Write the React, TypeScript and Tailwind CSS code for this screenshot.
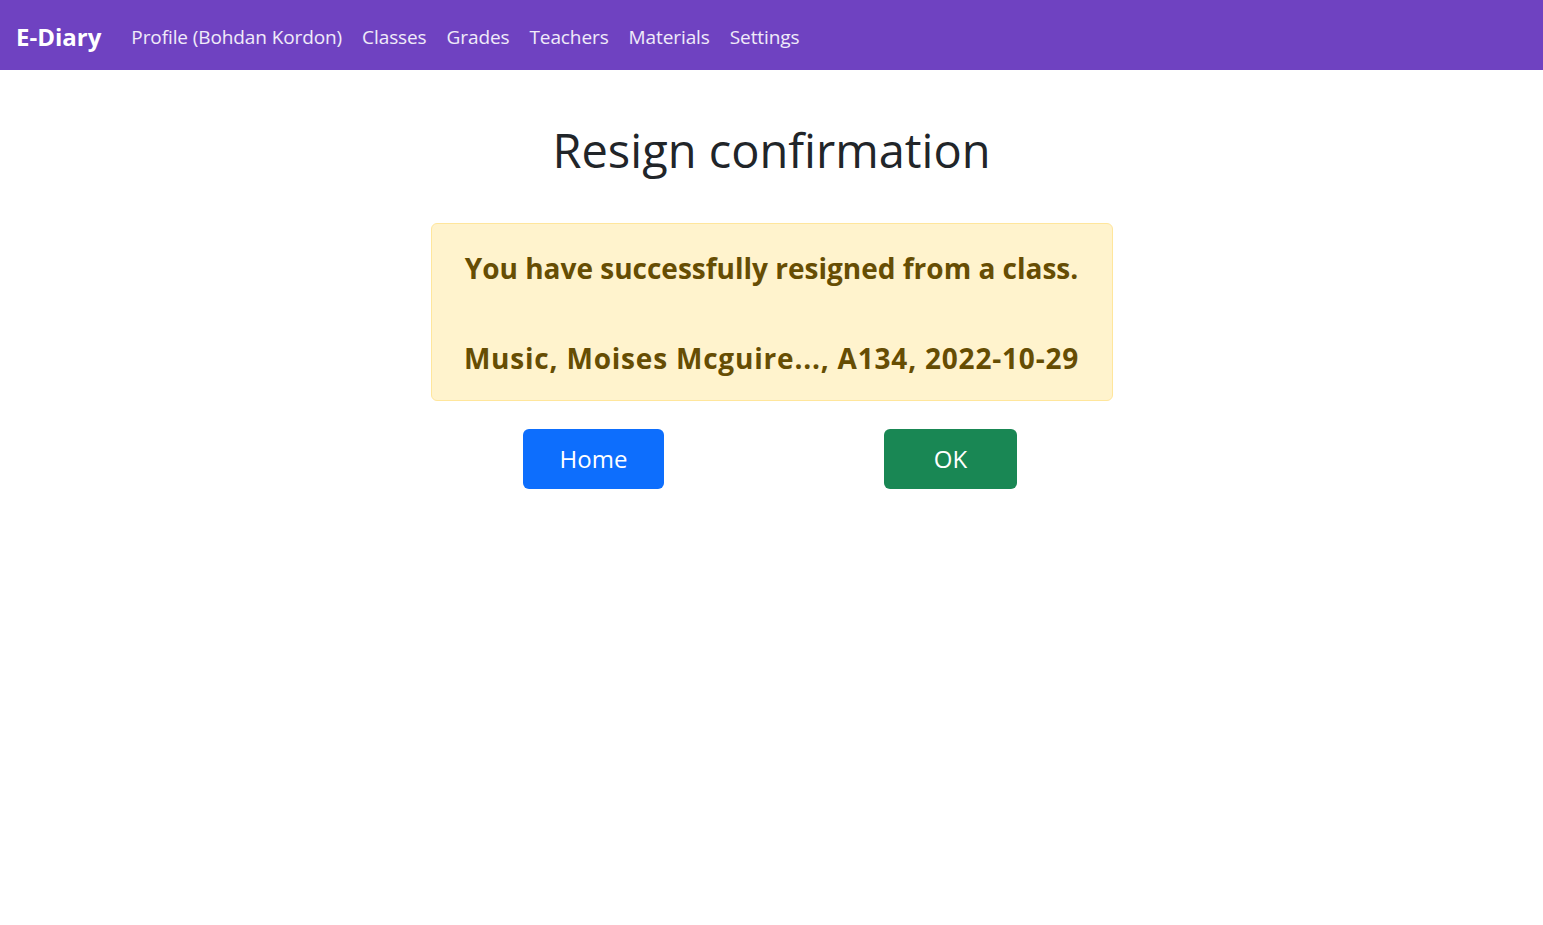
import React from "react";

const links = ["Profile (Bohdan Kordon)", "Classes", "Grades", "Teachers", "Materials", "Settings"];

const App = () => {
  return (
    <div className="min-h-screen bg-white font-['Open_Sans',_sans-serif] text-[#212529]">
      {/* Navbar */}
      <nav className="flex h-[70px] items-center bg-[#6f42c1] px-4 pt-[4px]">
        <span className="mr-[30px] text-[24px] font-bold text-white">E-Diary</span>
        <div className="flex gap-5">
          {links.map((l) => (
            <a key={l} href="#" className="text-[19px] tracking-[-0.1px] text-white/90">
              {l}
            </a>
          ))}
        </div>
      </nav>

      <main className="flex flex-col items-center">
        <h1 className="mt-[51px] text-[47px] leading-[58px]">Resign confirmation</h1>

        {/* Alert */}
        <div className="mt-[44px] flex w-[682px] flex-col items-center gap-[56px] rounded-md border border-[#ffe69c] bg-[#fff3cd] pt-[27px] pb-[25px] text-[#664d03]">
          <h3 className="text-[28px] font-bold leading-[34px]">You have successfully resigned from a class.</h3>
          <h3 className="text-[28px] font-bold leading-[34px] tracking-[0.8px]">Music, Moises Mcguire..., A134, 2022-10-29</h3>
        </div>

        <div className="mt-[28px] flex justify-center gap-[220px] pr-[3px]">
          <button className="h-[60px] w-[141px] rounded-md bg-[#0d6efd] text-[24px] text-white">Home</button>
          <button className="h-[60px] w-[133px] rounded-md bg-[#198754] text-[24px] text-white">OK</button>
        </div>
      </main>
    </div>
  );
};

export default App;
